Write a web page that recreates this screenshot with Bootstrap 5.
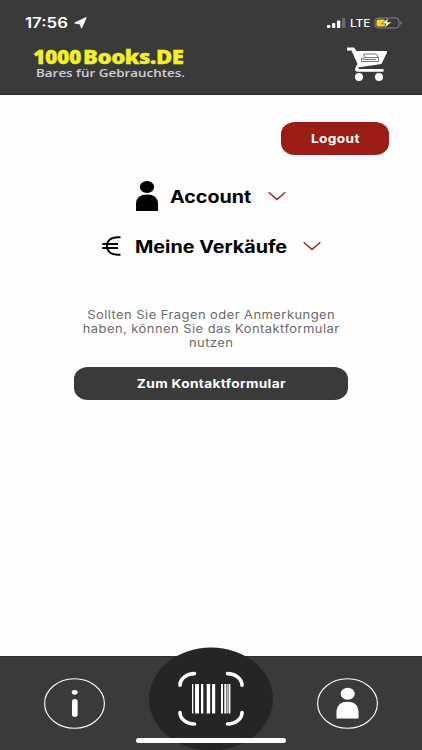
<!DOCTYPE html>
<html lang="de">
<head>
<meta charset="utf-8">
<meta name="viewport" content="width=device-width, initial-scale=1">
<title>1000Books.DE</title>
<link href="https://cdn.jsdelivr.net/npm/bootstrap@5.3.0/dist/css/bootstrap.min.css" rel="stylesheet">
<style>
body{font-family:Inter,"Liberation Sans",sans-serif;height:750px;overflow:hidden;background:#fefefe;color:#000}
svg{display:block;flex:none}
.wide{display:inline-block;white-space:nowrap;transform:scaleX(var(--sx,1.22))}
.from-left{transform-origin:0 50%}
.topbar{height:95px;background:#3a3a3a;border-bottom:1px solid #2e2e2e}
.status{height:44px;padding:1px 20px 0 25px}
.clock{font-size:14px;font-weight:600;width:49px;line-height:18px;--sx:1.2}
.lte{font-size:11px;font-weight:500;width:20px;line-height:18px;--sx:1.08}
.brand{font-family:"Open Sans",sans-serif;padding:3px 0 0 33px}
.brand-name{font-size:18.5px;font-weight:800;line-height:20px;color:#f3f126;letter-spacing:-.4px;-webkit-text-stroke:.3px #f3f126}
.brand-count{width:50px;--sx:1.15}
.brand-word{--sx:1.2}
.brand-claim{font-size:11.5px;font-weight:600;line-height:12px;color:#d2d2d4;padding-left:3px;--sx:1.165}
.cart{margin-right:24px;margin-top:1px}
.pill{border-radius:14px/12px;font-size:12px;font-weight:700;height:33px;line-height:33px;color:#fff;letter-spacing:.3px;--sx:1.14}
.pill:hover{color:#fff}
.logout{width:108px;background:#9c1d15;margin:27px 33px 16px 0}
.contact{width:274px;background:#3a3a3a}
.entry{height:50px;font-size:17px;font-weight:650;line-height:24px;--sx:1.16}
.label-account{width:81px;margin:0 17px 0 12px;padding-top:2px}
.label-sales{width:151px;margin:0 17px 0 14px;padding-top:2px}
.hint{font-size:11.3px;line-height:13.8px;color:#6a6a6a;letter-spacing:.4px;margin:38px 0 17px;--sx:1.145}
.tabs{height:94px;background:#3a3a3a;border-top:1px solid #2e2e2e;padding:0 44px}
.tab{margin-top:21px}
.scan{margin-top:-10px}
.home{left:136px;bottom:7px;width:150px;height:5px;border-radius:3px;background:#fff}
</style>
<script src="https://cdn.jsdelivr.net/npm/bootstrap@5.3.0/dist/js/bootstrap.bundle.min.js"></script>
</head>
<body class="d-flex flex-column">
<header class="topbar flex-shrink-0">
  <div class="status d-flex align-items-center text-white">
    <span class="clock"><span class="wide from-left">17:56</span></span>
    <svg width="13" height="12" viewBox="0 0 13 12"><path d="M12 .8 7.500 10.800 6.400 6.800 .9 6Z" fill="#fff" stroke="#fff" stroke-width="1.200" stroke-linejoin="round"/></svg>
    <div class="d-flex align-items-center ms-auto">
      <svg width="20" height="12" viewBox="0 0 20 12"><g fill="#fff"><rect x="1" y="8" width="3.300" height="3" rx=".8"/><rect x="6" y="6" width="3.300" height="5" rx=".8"/><rect x="11" y="3.500" width="3.300" height="7.500" rx=".8"/></g><rect x="16" y="1" width="3.300" height="10" rx=".8" fill="#6b6b6b"/></svg>
      <span class="lte ms-1 me-1"><span class="wide from-left">LTE</span></span>
      <svg width="28" height="12" viewBox="0 0 28 12"><rect x="1" y="1" width="24" height="10" rx="3" fill="none" stroke="#858585"/><rect x="2.500" y="2.500" width="8.500" height="7" rx="1.500" fill="#f8d51c"/><path d="M26.300 4v4q1.400-.8 1.400-2T26.300 4Z" fill="#858585"/><path d="M15 .5 7.500 6.800H12L10 11.600 17.700 5H13.200Z" fill="#fff" stroke="#3a3a3a" stroke-width=".6"/></svg>
    </div>
  </div>
  <div class="d-flex align-items-start">
    <div class="brand flex-grow-1">
      <div class="brand-name d-flex"><span class="brand-count"><span class="wide from-left">1000</span></span><span class="wide from-left brand-word">Books.DE</span></div>
      <div class="brand-claim"><span class="wide from-left">Bares für Gebrauchtes.</span></div>
    </div>
    <svg class="cart" width="51" height="38" viewBox="0 0 51 38"><path d="M0 2.500H7L9.500 6H39.500Q40.500 6.500 40 7.500L34.500 19 12 22.200 11 24H36.500V26.800H10.500Q7.300 26.300 8.300 23L10.500 19 4.500 5.500H0Z" fill="#fff"/><circle cx="12" cy="32" r="4" fill="#fff"/><circle cx="32" cy="32" r="4" fill="#fff"/><path d="M16.500 9H29.500L31.500 12.500H18.500ZM18 12.500L14.500 13.500V16.500H31.500V12.500M16 14.500H29" fill="none" stroke="#666" stroke-width=".9"/></svg>
  </div>
</header>
<main class="flex-grow-1 d-flex flex-column align-items-center">
  <a href="#" class="btn p-0 border-0 pill logout align-self-end"><span class="wide">Logout</span></a>
  <div class="entry d-flex align-items-center">
    <svg width="22" height="30" viewBox="0 0 22 30"><ellipse cx="11" cy="6" rx="7.200" ry="6"/><path d="M0 30V22.500Q.5 13.500 11 13.500T22 22.500V30Z"/></svg>
    <span class="label-account"><span class="wide from-left">Account</span></span>
    <svg width="18" height="10" viewBox="0 0 18 10"><path d="M.7 1.200 9 8.500 17.300 1.200" fill="none" stroke="#a3231c" stroke-width="1.500"/></svg>
  </div>
  <div class="entry d-flex align-items-center">
    <svg width="19" height="20" viewBox="0 0 19 20"><path d="M18.500 1.300H16C8.500 1.300 5 5 5 10S8.500 18.700 16 18.700H18.500M.3 8H16M.3 12H16" fill="none" stroke="#000" stroke-width="1.900"/></svg>
    <span class="label-sales"><span class="wide from-left">Meine Verkäufe</span></span>
    <svg width="18" height="10" viewBox="0 0 18 10"><path d="M.7 1.200 9 8.500 17.300 1.200" fill="none" stroke="#a3231c" stroke-width="1.500"/></svg>
  </div>
  <p class="hint text-center"><span class="wide">Sollten Sie Fragen oder Anmerkungen<br>haben, können Sie das Kontaktformular<br>nutzen</span></p>
  <a href="#" class="btn p-0 border-0 pill contact"><span class="wide">Zum Kontaktformular</span></a>
</main>
<nav class="tabs flex-shrink-0 position-relative d-flex justify-content-between align-items-start">
  <a href="#" class="tab" aria-label="Info"><svg width="61" height="51" viewBox="0 0 61 51"><ellipse cx="30.500" cy="25.500" rx="29.900" ry="24.700" fill="none" stroke="#fff" stroke-width="1.100"/><ellipse cx="30.700" cy="14.300" rx="2.900" ry="2.400" fill="#fff"/><rect x="28" y="21" width="5.600" height="18" rx="2.700" fill="#fff"/></svg></a>
  <a href="#" class="scan" aria-label="Scannen"><svg width="124" height="103" viewBox="149 647 124 103"><ellipse cx="211" cy="699" rx="62" ry="51.500" fill="#252525"/><path d="M180 685.300A14.500 11.700 0 0 1 194.500 673.600M227.500 673.600A14.500 11.700 0 0 1 242 685.300M180 712.500A14.500 11.500 0 0 0 194.500 724M227.500 724A14.500 11.500 0 0 0 242 712.500" fill="none" stroke="#fff" stroke-width="3.600" stroke-linecap="round"/><path d="M192 684h1.300v29.500H192ZM195 684h4v29.500h-4ZM201 684h2.300v29.500H201ZM206.700 684h3.500v29.500h-3.500ZM212 684h3.200v29.500H212ZM221 684h2v29.500h-2ZM224.300 684h1.800v29.500h-1.800ZM226.700 684h1v29.500h-1ZM228.500 684h1.900v29.500h-1.900Z" fill="#fff"/></svg></a>
  <a href="#" class="tab" aria-label="Account"><svg width="61" height="51" viewBox="0 0 61 51"><ellipse cx="30.500" cy="25.500" rx="29.900" ry="24.700" fill="none" stroke="#fff" stroke-width="1.100"/><ellipse cx="30.700" cy="15.800" rx="7.100" ry="6" fill="#fff"/><path d="M19.500 40.500V33Q20.500 23.700 30.500 23.700T41.500 33V40.500Z" fill="#fff"/></svg></a>
  <div class="home position-absolute"></div>
</nav>
</body>
</html>
